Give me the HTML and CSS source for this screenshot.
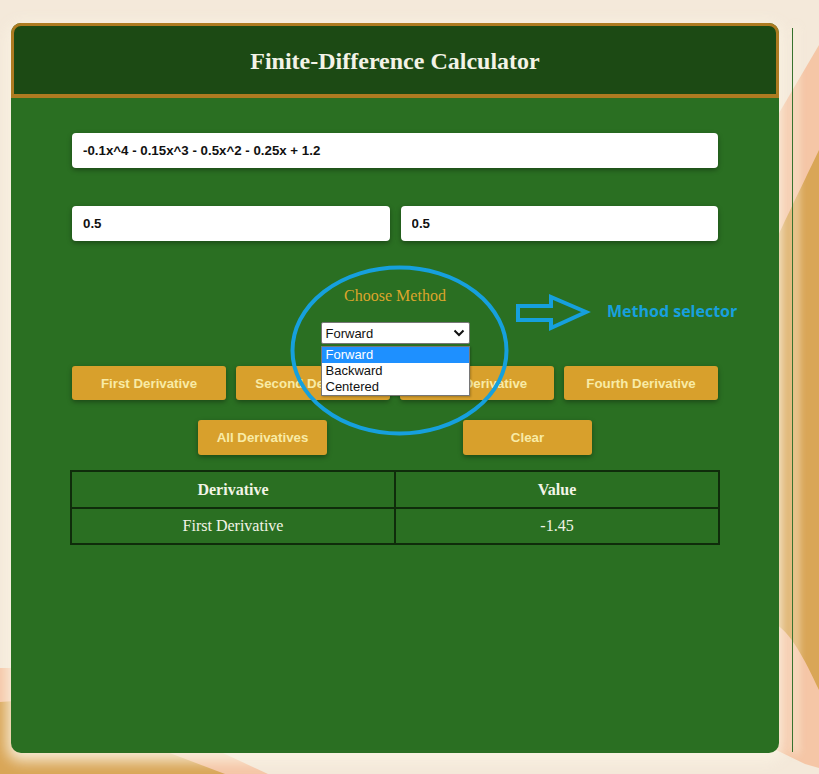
FILE: index.html
```html
<!DOCTYPE html>
<html lang="en">
<head>
<meta charset="utf-8">
<title>Finite-Difference Calculator</title>
<link rel="stylesheet" href="styles.css">
</head>
<body>
<svg class="backdrop" width="819" height="774" viewBox="0 0 819 774" aria-hidden="true">
  <rect width="819" height="774" fill="#f4e9da"/>
  <polygon points="819,45 772,125 772,748 805,764 819,768" fill="#f5c6a6"/>
  <path d="M819,150 C800,190 780,230 772,250 L772,622 C790,630 805,660 819,690 Z" fill="#d9a657"/>
  <polygon points="0,668 40,668 268,774 0,774" fill="#f5c6a6"/>
  <polygon points="0,702 30,700 225,774 0,774" fill="#d9a657"/>
</svg>
<div class="edge-line"></div>

<main class="card">
  <header class="card-header">
    <h1>Finite-Difference Calculator</h1>
  </header>
  <section class="card-body">
    <input class="field" type="text" value="-0.1x^4 - 0.15x^3 - 0.5x^2 - 0.25x + 1.2">
    <div class="pair">
      <input class="field" type="text" value="0.5">
      <input class="field" type="text" value="0.5">
    </div>
    <div class="method">
      <div class="method-label">Choose Method</div>
      <div class="select-wrap">
        <div class="select">
          <span>Forward</span>
          <svg class="chev" width="12" height="8" viewBox="0 0 12 8"><polyline points="1.5,1.5 6,6 10.5,1.5" fill="none" stroke="#111" stroke-width="2"/></svg>
        </div>
        <ul class="listbox">
          <li class="active">Forward</li>
          <li>Backward</li>
          <li>Centered</li>
        </ul>
      </div>
    </div>
    <div class="btn-row four">
      <button class="btn">First Derivative</button>
      <button class="btn">Second Derivative</button>
      <button class="btn">Third Derivative</button>
      <button class="btn">Fourth Derivative</button>
    </div>
    <div class="btn-row two">
      <button class="btn wide">All Derivatives</button>
      <button class="btn wide">Clear</button>
    </div>
    <table class="results">
      <thead>
        <tr><th>Derivative</th><th>Value</th></tr>
      </thead>
      <tbody>
        <tr><td>First Derivative</td><td>-1.45</td></tr>
      </tbody>
    </table>
  </section>
</main>

<svg class="annotation" width="819" height="774" viewBox="0 0 819 774" aria-hidden="true">
  <ellipse cx="399.5" cy="350.5" rx="107" ry="83" fill="none" stroke="#16a0dd" stroke-width="4"/>
  <polygon points="518,306 551,306 551,297 586,312 551,328 551,320 518,320" fill="none" stroke="#16a0dd" stroke-width="4" stroke-linejoin="miter"/>
</svg>
<div class="anno-text">Method selector</div>
</body>
</html>
```

FILE: styles.css
```css
* { box-sizing: border-box; }

html, body {
  margin: 0;
  padding: 0;
}

body {
  width: 819px;
  height: 774px;
  overflow: hidden;
  position: relative;
  padding: 23px 40px 0 11px;
  font-family: "Liberation Serif", "Times New Roman", serif;
  background: #f4e9da;
}

.backdrop {
  position: absolute;
  left: 0;
  top: 0;
  z-index: 0;
}

.edge-line {
  position: absolute;
  left: 792px;
  top: 28px;
  width: 1px;
  height: 724px;
  background: #2a6a22;
  box-shadow: 3px 0 8px 2px rgba(250, 240, 222, 0.85);
  z-index: 1;
}

.card {
  position: relative;
  z-index: 2;
  width: 768px;
  height: 730px;
  background: #2a6f22;
  border-radius: 10px;
  box-shadow: 0 4px 14px 4px rgba(250, 242, 226, 0.9);
  display: flex;
  flex-direction: column;
}

.card-header {
  height: 75px;
  background: #1c4a14;
  border: 3px solid #ae7b21;
  border-bottom-width: 4px;
  border-radius: 10px 10px 0 0;
  display: flex;
  align-items: center;
  justify-content: center;
  padding-top: 3px;
}

.card-header h1 {
  margin: 0;
  font-family: "Liberation Serif", "Times New Roman", serif;
  font-weight: bold;
  font-size: 24px;
  color: #f3f3e6;
}

.card-body {
  padding: 35px 61px 0 61px;
  display: flex;
  flex-direction: column;
}

.field {
  display: block;
  width: 100%;
  height: 35px;
  border: none;
  border-radius: 4px;
  background: #fff;
  padding: 0 11px;
  font-family: "Liberation Sans", Arial, sans-serif;
  font-weight: bold;
  font-size: 13.3px;
  color: #111;
  box-shadow: 0 2px 5px rgba(0, 0, 0, 0.35);
  outline: none;
}

.pair {
  margin-top: 38px;
  display: flex;
  gap: 11px;
}

.pair .field { flex: 1; }

.method {
  margin-top: 45px;
  display: flex;
  flex-direction: column;
  align-items: center;
}

.method-label {
  height: 20px;
  line-height: 20px;
  font-family: "Liberation Serif", "Times New Roman", serif;
  font-size: 16px;
  color: #dca52c;
}

.select-wrap {
  position: relative;
  margin-top: 16px;
  width: 149px;
}

.select {
  height: 22px;
  background: #fff;
  border: 1px solid #767676;
  border-radius: 2px;
  display: flex;
  align-items: center;
  justify-content: space-between;
  padding: 0 3px 0 4px;
  font-family: "Liberation Sans", Arial, sans-serif;
  font-size: 13px;
  color: #111;
}

.chev { margin-right: 1px; }

.listbox {
  position: absolute;
  left: 0;
  top: 24px;
  width: 149px;
  margin: 0;
  padding: 0;
  list-style: none;
  background: #fff;
  border: 1px solid #767676;
  z-index: 5;
  box-shadow: 1px 1px 2px rgba(0, 0, 0, 0.25);
}

.listbox li {
  height: 16px;
  line-height: 16px;
  padding-left: 4px;
  font-family: "Liberation Sans", Arial, sans-serif;
  font-size: 13px;
  color: #111;
}

.listbox li.active {
  background: #1e90ff;
  color: #fff;
}

.btn-row {
  display: flex;
}

.btn-row.four {
  margin-top: 22px;
  gap: 10px;
}

.btn-row.two {
  margin-top: 20px;
  justify-content: center;
  gap: 136px;
}

.btn {
  height: 34px;
  border: none;
  border-radius: 3px;
  background: #d8a02c;
  color: #f8eba6;
  font-family: "Liberation Sans", Arial, sans-serif;
  font-weight: bold;
  font-size: 13.3px;
  box-shadow: 0 2px 5px rgba(0, 0, 0, 0.35);
  padding: 0;
}

.btn-row.four .btn { flex: 1; }

.btn.wide {
  width: 129px;
  height: 35px;
}

.results {
  margin: 15px -2px 0;
  width: calc(100% + 4px);
  border-collapse: collapse;
  font-family: "Liberation Serif", "Times New Roman", serif;
  font-size: 16px;
  color: #f2f4e6;
}

.results th,
.results td {
  border: 2px solid #0f2c0b;
  text-align: center;
  width: 50%;
  padding: 0;
}

.results th {
  height: 37px;
  font-weight: bold;
}

.results td {
  height: 36px;
}

.annotation {
  position: absolute;
  left: 0;
  top: 0;
  z-index: 10;
  pointer-events: none;
}

.anno-text {
  position: absolute;
  left: 607px;
  top: 299px;
  z-index: 10;
  font-family: "Open Sans", sans-serif;
  font-weight: 700;
  font-size: 16px;
  line-height: 24px;
  color: #18a0de;
}
```
